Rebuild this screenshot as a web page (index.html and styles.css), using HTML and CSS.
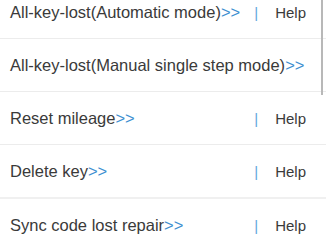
FILE: index.html
```html
<!DOCTYPE html>
<html lang="en">
<head>
  <meta charset="UTF-8">
  <title>Key functions</title>
  <link rel="stylesheet" href="styles.css">
</head>
<body>
  <div class="screen">
    <ul class="menu">
      <li class="menu-item">
        <span class="item-title">All-key-lost(Automatic mode)<em>&gt;&gt;</em></span>
        <span class="item-help"><i>|</i>Help</span>
      </li>
      <li class="menu-item">
        <span class="item-title">All-key-lost(Manual single step mode)<em>&gt;&gt;</em></span>
      </li>
      <li class="menu-item">
        <span class="item-title">Reset mileage<em>&gt;&gt;</em></span>
        <span class="item-help"><i>|</i>Help</span>
      </li>
      <li class="menu-item menu-item-split">
        <span class="item-title">Delete key<em>&gt;&gt;</em></span>
        <span class="item-help"><i>|</i>Help</span>
      </li>
      <li class="menu-item">
        <span class="item-title">Sync code lost repair<em>&gt;&gt;</em></span>
        <span class="item-help"><i>|</i>Help</span>
      </li>
    </ul>
    <div class="scrollbar"></div>
  </div>
</body>
</html>
```

FILE: styles.css
```css
:root {
  --text: #3a3a3a;
  --link: #3d8fd1;
  --line: #ececec;
}

body {
  margin: 0;
  background: #ffffff;
  font-family: 'Liberation Sans', Arial, sans-serif;
  color: var(--text);
}

.screen {
  position: relative;
  height: 245px;
  overflow: hidden;
}

.menu {
  list-style: none;
  margin: -14px 0 0 0;
  padding: 0;
}

.menu-item {
  display: flex;
  align-items: center;
  justify-content: space-between;
  height: 52px;
  padding: 0 20px 0 10px;
  border-bottom: 1px solid var(--line);
  font-size: 16.5px;
}

.menu-item-split {
  border-bottom-width: 2px;
  border-bottom-color: #f0f0f0;
}

.item-title em {
  font-style: normal;
  color: var(--link);
}

.item-help {
  font-size: 15px;
}

.item-help i {
  font-style: normal;
  color: #5fa6dc;
  margin-right: 17px;
}

.scrollbar {
  position: absolute;
  top: 0;
  right: 3px;
  width: 2px;
  height: 95px;
  background: #b8b8b8;
}
```
